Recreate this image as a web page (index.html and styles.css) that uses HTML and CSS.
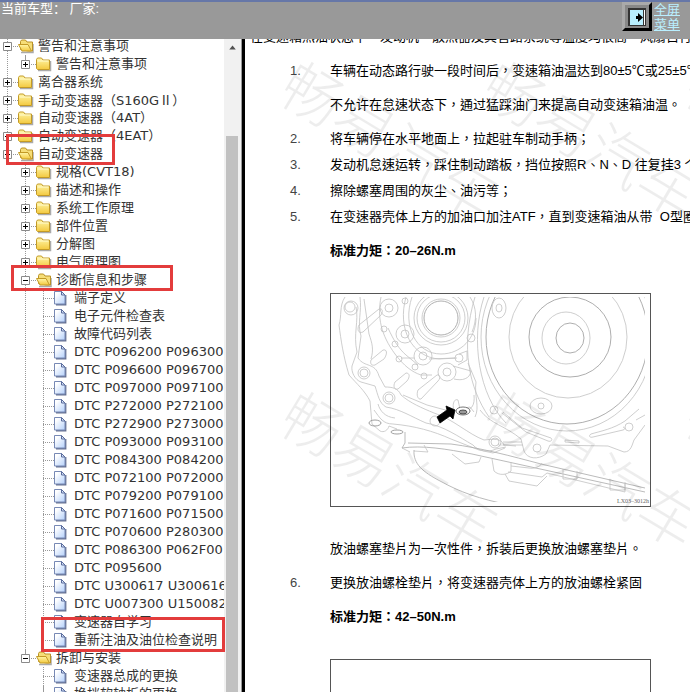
FILE: index.html
```html
<!DOCTYPE html>
<html lang="zh-CN">
<head>
<meta charset="utf-8">
<title>自动变速器</title>
<link rel="stylesheet" href="styles.css">
</head>
<body>
<svg class="defs" aria-hidden="true">
  <defs>
    <linearGradient id="gold" x1="0" y1="0" x2="0" y2="1"><stop offset="0" stop-color="#fff6a8"/><stop offset="1" stop-color="#f3c93f"/></linearGradient>
    <linearGradient id="sheet" x1="0" y1="0" x2="1" y2="1"><stop offset="0.2" stop-color="#fff"/><stop offset="1" stop-color="#b4d0fa"/></linearGradient>
    <symbol id="closed" viewBox="0 0 18 18">
      <path d="M2 15.500h12.500V6" fill="none" stroke="#aaa" stroke-width="1.500"/>
      <path d="M.5 13.500v-9l1-1.500h4l1.500 2h6.500v9.500h-12z" fill="url(#gold)" stroke="#c39a26"/>
      <path d="M1.500 6h11" stroke="#fffbd0"/>
    </symbol>
    <symbol id="open" viewBox="0 0 18 18">
      <path d="M3 15.500h12V7" fill="none" stroke="#aaa" stroke-width="1.500"/>
      <path d="M2.500 12.500v-8l1-1.500h4l1.500 2h5.500v9h-4z" fill="#f6de78" stroke="#b99126"/>
      <path d="M.5 7.500h9.500l3.500 6.500H4z" fill="url(#gold)" stroke="#c39a26"/>
    </symbol>
    <symbol id="page" viewBox="0 0 18 18">
      <path d="M2 15.700h9.700V6" fill="none" stroke="#667090" stroke-width="1.400"/>
      <path d="M.5 2.500h7l3.500 3.500v9H.5z" fill="url(#sheet)" stroke="#7789b5"/>
      <path d="M7.500 2.500V6H11z" fill="#d8e4fa" stroke="#5a6c9c"/>
    </symbol>
    <symbol id="plus" viewBox="0 0 9 9"><path d="M.5.5h8v8h-8z" fill="#fff" stroke="#8a8a8a"/><path d="M2 4.500h5M4.500 2v5" stroke="#000"/></symbol>
    <symbol id="minus" viewBox="0 0 9 9"><path d="M.5.5h8v8h-8z" fill="#fff" stroke="#8a8a8a"/><path d="M2 4.500h5" stroke="#000"/></symbol>
  </defs>
</svg>

<header class="topbar">
  <p class="vehicle">当前车型： 厂家:</p>
  <div class="tools">
    <button class="screen-button" type="button" aria-label="全屏">
      <svg viewBox="0 0 20 20"><path d="M1 1h18v18H1z" fill="#333"/><path d="M3 3h13v15H3z" fill="#b9efff"/><path d="M17 3h1v15h-1z" fill="#fff"/><path d="M9 9h2V6l5 4.500-5 4.500v-3H9z" fill="#000"/></svg>
    </button>
    <nav class="links"><a href="#full">全屏</a><a href="#menu">菜单</a></nav>
  </div>
</header>

<div class="workspace">
  <aside class="sidebar">
    <div class="tree-pane">
      <ul class="tree">
        <li><div class="row"><button class="toggle" aria-label="收起"><svg><use href="#minus"/></svg></button><svg class="icon"><use href="#open"/></svg><a href="#n">警告和注意事项</a></div>
          <ul><li><div class="row"><button class="toggle" aria-label="展开"><svg><use href="#plus"/></svg></button><svg class="icon"><use href="#closed"/></svg><a href="#n">警告和注意事项</a></div></li></ul>
        </li>
        <li><div class="row"><button class="toggle" aria-label="展开"><svg><use href="#plus"/></svg></button><svg class="icon"><use href="#closed"/></svg><a href="#n">离合器系统</a></div></li>
        <li><div class="row"><button class="toggle" aria-label="展开"><svg><use href="#plus"/></svg></button><svg class="icon"><use href="#closed"/></svg><a href="#n">手动变速器（S160G<span class="numeral">Ⅱ</span>）</a></div></li>
        <li><div class="row"><button class="toggle" aria-label="展开"><svg><use href="#plus"/></svg></button><svg class="icon"><use href="#closed"/></svg><a href="#n">自动变速器（4AT）</a></div></li>
        <li><div class="row"><button class="toggle" aria-label="展开"><svg><use href="#plus"/></svg></button><svg class="icon"><use href="#closed"/></svg><a href="#n">自动变速器（4EAT）</a></div></li>
        <li><div class="row"><button class="toggle" aria-label="收起"><svg><use href="#minus"/></svg></button><svg class="icon"><use href="#open"/></svg><a href="#n">自动变速器</a></div>
          <ul>
            <li><div class="row"><button class="toggle" aria-label="展开"><svg><use href="#plus"/></svg></button><svg class="icon"><use href="#closed"/></svg><a href="#n">规格(CVT18)</a></div></li>
            <li><div class="row"><button class="toggle" aria-label="展开"><svg><use href="#plus"/></svg></button><svg class="icon"><use href="#closed"/></svg><a href="#n">描述和操作</a></div></li>
            <li><div class="row"><button class="toggle" aria-label="展开"><svg><use href="#plus"/></svg></button><svg class="icon"><use href="#closed"/></svg><a href="#n">系统工作原理</a></div></li>
            <li><div class="row"><button class="toggle" aria-label="展开"><svg><use href="#plus"/></svg></button><svg class="icon"><use href="#closed"/></svg><a href="#n">部件位置</a></div></li>
            <li><div class="row"><button class="toggle" aria-label="展开"><svg><use href="#plus"/></svg></button><svg class="icon"><use href="#closed"/></svg><a href="#n">分解图</a></div></li>
            <li><div class="row"><button class="toggle" aria-label="展开"><svg><use href="#plus"/></svg></button><svg class="icon"><use href="#closed"/></svg><a href="#n">电气原理图</a></div></li>
            <li><div class="row"><button class="toggle" aria-label="收起"><svg><use href="#minus"/></svg></button><svg class="icon"><use href="#open"/></svg><a href="#n">诊断信息和步骤</a></div>
              <ul>
                <li><div class="row leaf"><svg class="icon"><use href="#page"/></svg><a href="#n">端子定义</a></div></li>
                <li><div class="row leaf"><svg class="icon"><use href="#page"/></svg><a href="#n">电子元件检查表</a></div></li>
                <li><div class="row leaf"><svg class="icon"><use href="#page"/></svg><a href="#n">故障代码列表</a></div></li>
                <li><div class="row leaf"><svg class="icon"><use href="#page"/></svg><a href="#n">DTC P096200 P096300</a></div></li>
                <li><div class="row leaf"><svg class="icon"><use href="#page"/></svg><a href="#n">DTC P096600 P096700</a></div></li>
                <li><div class="row leaf"><svg class="icon"><use href="#page"/></svg><a href="#n">DTC P097000 P097100</a></div></li>
                <li><div class="row leaf"><svg class="icon"><use href="#page"/></svg><a href="#n">DTC P272000 P272100</a></div></li>
                <li><div class="row leaf"><svg class="icon"><use href="#page"/></svg><a href="#n">DTC P272900 P273000</a></div></li>
                <li><div class="row leaf"><svg class="icon"><use href="#page"/></svg><a href="#n">DTC P093000 P093100</a></div></li>
                <li><div class="row leaf"><svg class="icon"><use href="#page"/></svg><a href="#n">DTC P084300 P084200</a></div></li>
                <li><div class="row leaf"><svg class="icon"><use href="#page"/></svg><a href="#n">DTC P072100 P072000</a></div></li>
                <li><div class="row leaf"><svg class="icon"><use href="#page"/></svg><a href="#n">DTC P079200 P079100</a></div></li>
                <li><div class="row leaf"><svg class="icon"><use href="#page"/></svg><a href="#n">DTC P071600 P071500</a></div></li>
                <li><div class="row leaf"><svg class="icon"><use href="#page"/></svg><a href="#n">DTC P070600 P280300</a></div></li>
                <li><div class="row leaf"><svg class="icon"><use href="#page"/></svg><a href="#n">DTC P086300 P062F00</a></div></li>
                <li><div class="row leaf"><svg class="icon"><use href="#page"/></svg><a href="#n">DTC P095600</a></div></li>
                <li><div class="row leaf"><svg class="icon"><use href="#page"/></svg><a href="#n">DTC U300617 U300616</a></div></li>
                <li><div class="row leaf"><svg class="icon"><use href="#page"/></svg><a href="#n">DTC U007300 U150082</a></div></li>
                <li><div class="row leaf"><svg class="icon"><use href="#page"/></svg><a href="#n">变速器自学习</a></div></li>
                <li><div class="row leaf"><svg class="icon"><use href="#page"/></svg><a href="#n">重新注油及油位检查说明</a></div></li>
              </ul>
            </li>
            <li><div class="row"><button class="toggle" aria-label="收起"><svg><use href="#minus"/></svg></button><svg class="icon"><use href="#open"/></svg><a href="#n">拆卸与安装</a></div>
              <ul>
                <li><div class="row leaf"><svg class="icon"><use href="#page"/></svg><a href="#n">变速器总成的更换</a></div></li>
                <li><div class="row leaf"><svg class="icon"><use href="#page"/></svg><a href="#n">换挡软轴板的更换</a></div></li>
              </ul>
            </li>
          </ul>
        </li>
      </ul>
    </div>
    <div class="scrollbar" aria-hidden="true">
      <svg class="arrow" viewBox="0 0 16 16"><path d="M4 11l4-5 4 5z" fill="#505050"/></svg>
      <div class="thumb"></div>
    </div>
    <span class="mark mark-gearbox"></span>
    <span class="mark mark-steps"></span>
    <span class="mark mark-refill"></span>
  </aside>

  <main class="document" lang="zh-Hant">
    <p class="intro">在变速箱热油状态下，发动机、散热器及其管路系统等温度均很高，风扇自行</p>
    <ol class="steps">
      <li><span class="num">1.</span><div><p>车辆在动态路行驶一段时间后，变速箱油温达到80±5℃或25±5℃</p><p class="note">不允许在怠速状态下，通过猛踩油门来提高自动变速箱油温。</p></div></li>
      <li class="spaced"><span class="num">2.</span><p>将车辆停在水平地面上，拉起驻车制动手柄；</p></li>
      <li><span class="num">3.</span><p>发动机怠速运转，踩住制动踏板，挡位按照R、N、D 往复挂3 个循环</p></li>
      <li><span class="num">4.</span><p>擦除螺塞周围的灰尘、油污等；</p></li>
      <li><span class="num">5.</span><div><p>在变速器壳体上方的加油口加注ATF，直到变速箱油从带&nbsp; O型圈</p><p class="note"><b>标准力矩：20–26N.m</b></p>
        <figure class="figure">
          <svg viewBox="0 0 319 212" fill="none" stroke="#c2c2c2" stroke-width=".8">
            <clipPath id="frame"><path d="M5 3h309v205H5z"/></clipPath>
            <g clip-path="url(#frame)">
              <g stroke="#999"><ellipse cx="236" cy="43" rx="81" ry="87"/><ellipse cx="239" cy="43" rx="41" ry="40"/><ellipse cx="239" cy="44" rx="14" ry="15"/></g>
              <ellipse cx="237" cy="43" rx="59" ry="61"/><ellipse cx="235" cy="44" rx="24" ry="26"/><ellipse cx="236" cy="43" rx="86" ry="94"/>
              <path d="M153 3c-14 42-5 99 22 126M144 3c-15 50-6 91 14 120"/>
              <circle cx="110" cy="24" r="17" stroke="#999"/><circle cx="110" cy="24" r="19"/><circle cx="110" cy="24" r="24"/><circle cx="110" cy="24" r="27"/>
              <path d="M81 3c-10 29 4 57 29 57 20 0 35-16 35-36M75 3c-9 32 6 60 33 62l18-1M139 3c7 11 7 23 2 35"/>
              <g><circle cx="58" cy="14" r="9"/><circle cx="58" cy="14" r="4"/><circle cx="74" cy="40" r="9"/><circle cx="74" cy="40" r="4"/><circle cx="92" cy="62" r="9"/><circle cx="92" cy="62" r="4"/><circle cx="116" cy="78" r="9"/><circle cx="116" cy="78" r="4"/><circle cx="53" cy="35" r="3"/><circle cx="68" cy="65" r="3"/><circle cx="93" cy="82" r="3"/><circle cx="128" cy="64" r="4"/><circle cx="140" cy="44" r="4"/><circle cx="64" cy="50" r="3"/><circle cx="84" cy="73" r="3"/><circle cx="74" cy="7" r="3"/></g>
              <path d="M50 3c-4 20 0 38 14 57 9 12 17 18 26 21h11M57 34c6 13 11 21 18 27l12 10M70 64h13M98 65l26-1M128 60l8-3v9l-9 5M122 72l18 5c-1 8-9 10-17 8"/>
              <path d="M28 31l20-16c4-1 4 3 2 6L32 38c-5 2-6-3-4-7zM40 66l12-10c5-1 4 5 1 9l-9 6c-4 1-5-2-4-5zM64 88l11-9c4 0 4 4 1 8l-9 8c-4 1-5-3-3-7zM87 96l19-15c3-1 4 3 1 6L90 105c-3 1-5-4-3-9z"/>
              <circle cx="20" cy="14" r="7"/><circle cx="19" cy="13" r="5"/><circle cx="33" cy="79" r="6"/><circle cx="33" cy="79" r="4"/><circle cx="58" cy="104" r="6"/><circle cx="58" cy="104" r="4"/><circle cx="104" cy="127" r="5"/><circle cx="164" cy="148" r="6"/><circle cx="164" cy="148" r="4"/>
              <path d="M14 3C8 12 11 22 8 31c2 15 4 30 10 50 8 9 16 16 21 26l2 23 8 7c4 2 8-1 9-5l8 3"/>
              <path d="M29 3c2 15-3 26 1 39l-3 22c7 10 17 4 21 18l6 11c7 0 13 1 16 8 9 8 21 13 33 18 19 6 34 21 50 27 10-1 17-2 20 5l12 1"/>
              <path d="M25 13c3 14-3 27 1 45l-5 14c-1 6 3 14 9 16l14 4c3 9 4 17 11 21 14 2 26 10 40 16 18 3 33 14 47 22 5 6 15 8 23 4l10-2"/>
              <path d="M43 116c6 8 9 14 19 14 22 2 40 7 58 15l28 11 14 3 12-5M47 110c2 7 7 13 17 14M33 5l5 35c3 9 5 15 2 25M72 101l24 10 22 6M137 69l8 19c-2 14 4 25-1 35"/>
              <path d="M123 116c-2-5 0-12 4-10l2 9 10-2 4 5M129 116c12 2 15-5 14-15"/>
              <ellipse cx="44" cy="129" rx="6" ry="3" stroke="#888"/><ellipse cx="66" cy="138" rx="6" ry="2" stroke="#888"/>
              <ellipse cx="132" cy="117" rx="7" ry="4" fill="#fff" stroke="#555"/><ellipse cx="132" cy="118" rx="4" ry="2" fill="#999" stroke="#333"/>
              <path stroke="#aaa" d="M74 138v11l-3 5M77 149l43 1c30 4 60 12 90 20l104 24M71 154c20-3 45 1 70 6l173 38"/>
              <path d="M71 154l8 4M83 157l14 1-4-7"/>
              <path stroke="#aaa" d="M83 156c-1 14 9 22 26 31 20 11 39 18 70 24"/>
              <path d="M121 160l13 10 14-2 2-5M161 165l2 12c5 5 13 4 17 0v-9M180 172l18 2c5 1 11-1 13-5M174 180l4 7 28 5 10-10M177 178l34 5 5-4 78 19v-8M232 175v10h14v-8M279 185v11h15v-8"/>
              <path d="M149 116c10 14 26 16 41 29l3 12c3 8 14 9 22 3l4-9 58 1 16 6c7 0 8-7 10-12l11-15M172 118l19 16 29 10c2 2 0 4-3 3l-22-9-24-19M234 146l14 1v2l-14-1zM172 148h19M172 151h20M308 115l-14 12c-12 8-24 10-34 13-3 2-1 4 2 3l30-7c2 0 2-3 0-3M314 121l-9 5"/>
              <circle cx="206" cy="154" r="4"/><circle cx="298" cy="133" r="4"/><circle cx="163" cy="116" r="4"/>
              <ellipse cx="168" cy="14" rx="7" ry="10"/><ellipse cx="168" cy="14" rx="3" ry="4"/><ellipse cx="210" cy="112" rx="11" ry="8"/><circle cx="210" cy="112" r="3"/>
            </g>
            <path d="M106 123l10-7-1-4 9 4-2 9-3-3-10 7z" fill="#000" stroke="#000"/>
            <text class="code" x="286" y="209">LX03–3012h</text>
          </svg>
        </figure>
        <p>放油螺塞垫片为一次性件，拆装后更换放油螺塞垫片。</p></div></li>
      <li class="spaced"><span class="num">6.</span><div><p>更换放油螺栓垫片，将变速器壳体上方的放油螺栓紧固</p><p class="note"><b>标准力矩：42–50N.m</b></p>
        <figure class="figure"><svg viewBox="0 0 319 212"></svg></figure></div></li>
    </ol>
    <svg class="watermark" aria-hidden="true">
      <text transform="translate(30 59) rotate(31)">畅易汽车</text>
      <text transform="translate(232 59) rotate(31)">畅易汽车</text>
      <text transform="translate(434 59) rotate(31)">畅易汽车</text>
      <text transform="translate(30 389) rotate(31)">畅易汽车</text>
      <text transform="translate(232 389) rotate(31)">畅易汽车</text>
      <text transform="translate(434 389) rotate(31)">畅易汽车</text>
    </svg>
  </main>
</div>
</body>
</html>
```
FILE: styles.css
```css
* { box-sizing: border-box; }

body {
  margin: 0;
  height: 100vh;
  display: flex;
  flex-direction: column;
  overflow: hidden;
  background: #fff;
  font: 13px/18px "DejaVu Sans", "Noto Sans CJK SC", sans-serif;
  color: #333;
}

p, ul, ol, figure { margin: 0; padding: 0; }
ul, ol { list-style: none; }
a { color: inherit; text-decoration: none; }
.defs { position: absolute; width: 0; height: 0; }

.topbar {
  flex: none;
  height: 39px;
  display: flex;
  justify-content: space-between;
  border-top: 2px solid #6677a8;
  background: #999;
  font-family: "Liberation Sans", "Noto Sans CJK SC", sans-serif;
}
.vehicle { padding-left: 1px; line-height: 14px; color: #fff; }
.tools { display: flex; gap: 2px; padding-right: 10px; }
.screen-button {
  width: 30px;
  height: 29px;
  padding: 0;
  border: 3px solid;
  border-color: #aaa #000 #000 #aaa;
  background: #888;
  display: grid;
  place-items: center;
}
.screen-button svg { width: 20px; height: 20px; }
.links { display: flex; flex-direction: column; line-height: 15px; color: #b9efff; }
.links a { text-decoration: underline; }

.workspace { flex: 1; min-height: 0; display: flex; }

.sidebar {
  position: relative;
  flex: none;
  width: 245px;
  display: flex;
  border-right: 3px solid #000;
  overflow: hidden;
}
.tree-pane { flex: 1; overflow: hidden; white-space: nowrap; }
.tree { margin-top: -2px; }
.tree ul { padding-left: 18px; }
.tree li {
  background: linear-gradient(#999 50%, transparent 50%) 7px 0 / 1px 2px repeat-y;
}
.tree li:last-child { background: none; }
.row {
  display: flex;
  align-items: center;
  height: 18px;
  background: linear-gradient(90deg, #999 50%, transparent 50%) 7px 9px / 2px 1px repeat-x;
}
.tree li:last-child > .row {
  background:
    linear-gradient(90deg, #999 50%, transparent 50%) 7px 9px / 2px 1px repeat-x,
    linear-gradient(#999, #999) 7px 0 / 1px 9px no-repeat;
}
.row::before { content: ""; width: 3px; height: 18px; background: #fff; flex: none; }
.leaf::before { width: 7px; margin-right: 11px; }
.toggle {
  flex: none;
  width: 9px;
  height: 9px;
  margin-right: 6px;
  padding: 0;
  border: 0;
  background: #fff;
}
.toggle svg { display: block; width: 9px; height: 9px; }
.icon { flex: none; width: 18px; height: 18px; background: #fff; }
.row a { padding-left: 2px; background: #fff; flex: 1; line-height: 18px; }
.numeral { font-family: "Noto Sans CJK SC", sans-serif; }

.scrollbar {
  flex: none;
  width: 18px;
  background: #f1f1f1;
  padding: 0 3px 0 2px;
  display: flex;
  flex-direction: column;
  border-right: 1px solid #999;
}
.arrow { flex: none; width: 13px; height: 16px; }
.thumb { flex: 1; margin-top: 81px; background: #c1c1c1; }

.mark { position: absolute; border: 3px solid #e33c3c; }
.mark-gearbox { left: 6px; top: 95px; width: 109px; height: 31px; }
.mark-steps { left: 11px; top: 226px; width: 162px; height: 26px; }
.mark-refill { left: 41px; top: 578px; width: 184px; height: 35px; }

.document {
  position: relative;
  flex: 1;
  min-width: 0;
  overflow: hidden;
  padding-left: 5px;
  font: 13px/26px "Liberation Sans", "Noto Sans CJK TC", sans-serif;
  color: #000;
  white-space: nowrap;
}
.intro { margin-top: -15px; }
.steps { padding: 8px 0 0 40px; }
.steps li { display: grid; grid-template-columns: 40px 1fr; }
.steps .spaced { margin-top: 8px; }
.num { color: #444; }
.note { margin-top: 8px; }
.figure { width: 321px; margin: 29px 0; border: 1px solid #555; }
.figure svg { display: block; width: 100%; }
.code { font: 6px "Liberation Serif", serif; fill: #666; stroke: none; }

.watermark { position: absolute; inset: 0; width: 100%; height: 100%; pointer-events: none; }
.watermark text { font: 300 60px "Noto Sans CJK SC", sans-serif; fill: #000; fill-opacity: 0.07; }
```
